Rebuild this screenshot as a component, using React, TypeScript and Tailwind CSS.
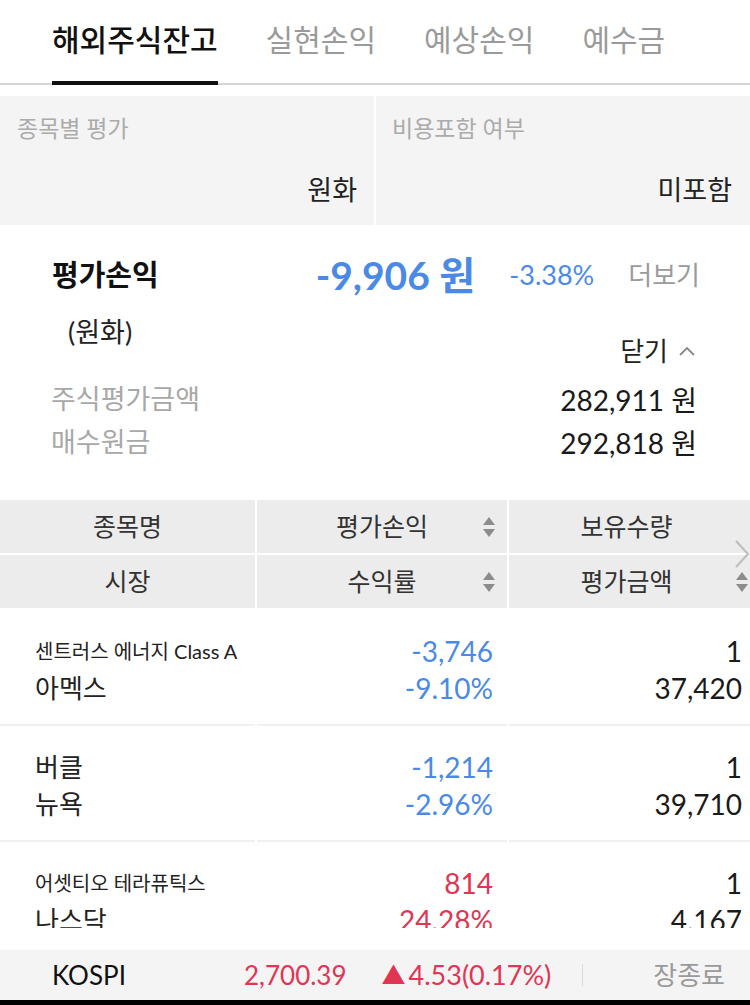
const font = { fontFamily: "Lato, 'Noto Sans CJK KR', sans-serif" };

const SortIcon = ({ className = "" }: { className?: string }) => (
	<svg width="14" height="22" viewBox="0 0 14 22" className={className}>
		<path d="M7 1 L13 9 L1 9 Z" fill="#8c8c8c" />
		<path d="M1 13 L13 13 L7 21 Z" fill="#8c8c8c" />
	</svg>
);

type Holding = {
	name: string;
	small?: boolean;
	market: string;
	pl: string;
	rate: string;
	qty: string;
	value: string;
	up?: boolean;
};

const holdings: Holding[] = [
	{ name: "센트러스 에너지 Class A", small: true, market: "아멕스", pl: "-3,746", rate: "-9.10%", qty: "1", value: "37,420" },
	{ name: "버클", market: "뉴욕", pl: "-1,214", rate: "-2.96%", qty: "1", value: "39,710" },
	{ name: "어셋티오 테라퓨틱스", small: true, market: "나스닥", pl: "814", rate: "24.28%", qty: "1", value: "4,167", up: true },
];

const tabs = ["해외주식잔고", "실현손익", "예상손익", "예수금"];

export default function App() {
	return (
		<div className="w-[750px] h-[1005px] flex flex-col bg-white overflow-hidden text-[#222]" style={font}>
			{/* tabs */}
			<div className="flex h-[85px] shrink-0 border-b-2 border-[#d6d6d6] px-[52px] gap-[48px]">
				{tabs.map((t, i) => (
					<div
						key={t}
						className={
							i === 0
								? "flex items-center h-[85px] text-[30px] font-medium text-[#111] border-b-4 border-[#111] pb-[3px]"
								: "flex items-center h-[83px] text-[30px] text-[#9a9a9a] pb-[4px]"
						}
					>
						{t}
					</div>
				))}
			</div>

			{/* settings */}
			<div className="grid grid-cols-2 gap-x-[2px] mt-[11px] h-[129px] shrink-0">
				<div className="bg-[#f4f4f4] px-[17px] pt-[18px] flex flex-col">
					<div className="text-[23px] leading-[28px] text-[#ababab]">종목별 평가</div>
					<div className="mt-[31px] text-[27px] leading-[34px] text-right text-[#222]">원화</div>
				</div>
				<div className="bg-[#f4f4f4] pl-[16px] pr-[18px] pt-[18px] flex flex-col">
					<div className="text-[23px] leading-[28px] text-[#ababab]">비용포함 여부</div>
					<div className="mt-[31px] text-[27px] leading-[34px] text-right text-[#222]">미포함</div>
				</div>
			</div>

			{/* summary */}
			<div className="pt-[30px] pb-[36px] shrink-0">
				<div className="flex items-center justify-between h-[40px] pl-[52px] pr-[50px]">
					<span className="text-[29px] font-bold text-[#111]">평가손익</span>
					<div className="flex items-center gap-[34px]">
						<span className="text-[39px] font-bold text-[#4a8ae6] leading-none">-9,906 원</span>
						<span className="text-[27px] text-[#4a8ae6]">-3.38%</span>
						<span className="text-[26px] text-[#9a9a9a]">더보기</span>
					</div>
				</div>
				<div className="flex justify-between h-[83px] pl-[68px] pr-[54px]">
					<span className="mt-[22px] text-[27px] leading-[30px] text-[#222]">(원화)</span>
					<span className="mt-[29px] text-[26px] leading-[30px] text-[#222] flex items-center gap-[10px]">
						닫기
						<svg width="18" height="12" viewBox="0 0 18 12">
							<path d="M2 10 L9 3 L16 10" fill="none" stroke="#888" strokeWidth="1.8" />
						</svg>
					</span>
				</div>
				<div className="flex justify-between items-center h-[43px] pl-[51px] pr-[53px]">
					<span className="text-[27px] text-[#a8a8a8]">주식평가금액</span>
					<span className="text-[28px] text-[#1a1a1a]">282,911 원</span>
				</div>
				<div className="flex justify-between items-center h-[43px] pl-[51px] pr-[53px]">
					<span className="text-[27px] text-[#a8a8a8]">매수원금</span>
					<span className="text-[28px] text-[#1a1a1a]">292,818 원</span>
				</div>
			</div>

			{/* table header */}
			<div className="relative grid grid-cols-[255px_250px_1fr] gap-[2px] bg-white shrink-0 text-[25px] text-[#333]">
				<div className="bg-[#ececec] h-[53px] flex items-center justify-center">종목명</div>
				<div className="bg-[#ececec] h-[53px] relative flex items-center justify-center">
					평가손익
					<SortIcon className="absolute right-[11px] top-[16px]" />
				</div>
				<div className="bg-[#ececec] h-[53px] flex items-center justify-center pr-[6px]">보유수량</div>
				<div className="bg-[#ececec] h-[53px] flex items-center justify-center">시장</div>
				<div className="bg-[#ececec] h-[53px] relative flex items-center justify-center">
					수익률
					<SortIcon className="absolute right-[11px] top-[16px]" />
				</div>
				<div className="bg-[#ececec] h-[53px] relative flex items-center justify-center pr-[6px]">
					평가금액
					<SortIcon className="absolute right-[1px] top-[16px]" />
				</div>
				<svg width="16" height="30" viewBox="0 0 16 30" className="absolute right-0 top-[39px]">
					<path d="M2 2 L14 15 L2 28" fill="none" stroke="#bdbdbd" strokeWidth="2" />
				</svg>
			</div>

			{/* rows */}
			<div className="mt-[2px] h-[318px] overflow-hidden shrink-0">
				{holdings.map((h) => (
					<div key={h.name} className="grid grid-cols-[255px_250px_1fr] gap-x-[2px] h-[116px]">
						<div className="border-b-2 border-[#f0f0f0] pl-[35px] pt-[24px]">
							<div className={h.small ? "h-[34px] flex items-center text-[20px] text-[#222]" : "h-[34px] flex items-center text-[26px] text-[#222]"}>
								{h.name}
							</div>
							<div className="h-[40px] flex items-center text-[26px] text-[#222]">{h.market}</div>
						</div>
						<div className={h.up ? "border-b-2 border-[#f0f0f0] pr-[14px] pt-[24px] text-right text-[28px] text-[#e03553]" : "border-b-2 border-[#f0f0f0] pr-[14px] pt-[24px] text-right text-[28px] text-[#4a8ae6]"}>
							<div className="h-[34px] flex items-center justify-end">{h.pl}</div>
							<div className="h-[40px] flex items-center justify-end">{h.rate}</div>
						</div>
						<div className="border-b-2 border-[#f0f0f0] pr-[8px] pt-[24px] text-[28px] text-[#1a1a1a]">
							<div className="h-[34px] flex items-center justify-end">{h.qty}</div>
							<div className="h-[40px] flex items-center justify-end">{h.value}</div>
						</div>
					</div>
				))}
			</div>
			<div className="flex-1" />

			{/* index bar */}
			<div className="h-[50px] shrink-0 bg-[#f4f4f4] flex items-center text-[26px]">
				<span className="ml-[52px] w-[192px] text-[#111]">KOSPI</span>
				<span className="text-[#e03553]">2,700.39</span>
				<span className="ml-[35px] text-[#e03553] flex items-center text-[27px]">
					<span className="text-[24px] mr-[3px]">▲</span>4.53(0.17%)
				</span>
				<span className="ml-[31px] w-[1px] h-[22px] bg-[#dcdcdc]" />
				<span className="ml-auto mr-[25px] text-[#9a9a9a]">장종료</span>
			</div>
			<div className="h-[5px] shrink-0 bg-black" />
		</div>
	);
}
